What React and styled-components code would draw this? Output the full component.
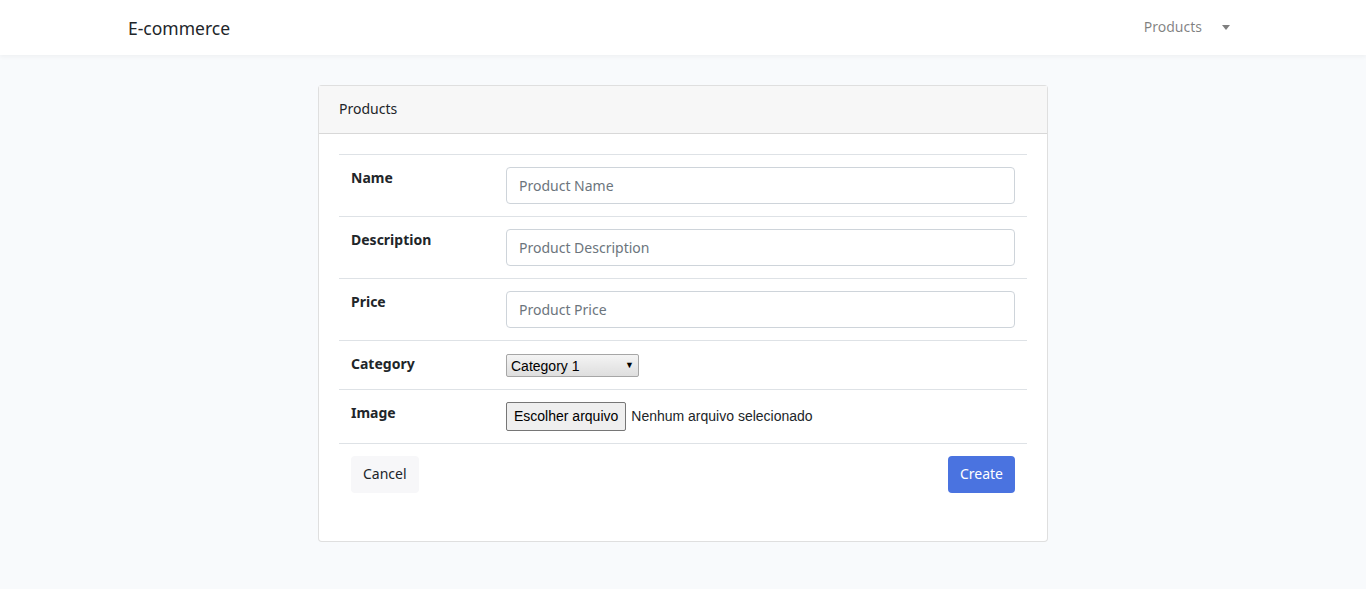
import styled, { createGlobalStyle } from "styled-components";

const GlobalStyle = createGlobalStyle`
  body {
    margin: 0;
    background: #f8fafc;
    font-family: "Noto Sans", "Open Sans", sans-serif;
    font-size: 14px;
    line-height: 1.6;
    color: #212529;
  }
  * { box-sizing: border-box; }
`;

// NAVBAR
const Nav = styled.nav`
  background: #fff;
  height: 55px;
  box-shadow: 0 2px 4px rgba(0, 0, 0, 0.04);
`;

const NavInner = styled.div`
  max-width: 1140px;
  margin: 0 auto;
  padding: 0 15px;
  height: 100%;
  display: flex;
  align-items: center;
  justify-content: space-between;
`;

const Brand = styled.a`
  font-size: 17.5px;
  color: #212529;
  text-decoration: none;
`;

const NavLink = styled.a`
  display: flex;
  align-items: center;
  gap: 20px;
  color: rgba(0, 0, 0, 0.5);
  padding-right: 8px;
`;

const Caret = styled.span`
  width: 0;
  height: 0;
  border-left: 4px solid transparent;
  border-right: 4px solid transparent;
  border-top: 5px solid rgba(0, 0, 0, 0.5);
`;

// CARD
const Main = styled.main`
  padding-top: 30px;
  display: flex;
  justify-content: center;
`;

const Card = styled.div`
  width: 730px;
  background: #fff;
  border: 1px solid rgba(0, 0, 0, 0.125);
  border-radius: 4px;
`;

const CardHeader = styled.div`
  height: 48px;
  padding: 0 20px;
  display: flex;
  align-items: center;
  background: #f7f7f7;
  border-bottom: 1px solid rgba(0, 0, 0, 0.125);
`;

const CardBody = styled.div`
  padding: 20px;
`;

const Table = styled.div`
  margin-bottom: 16px;
`;

const Row = styled.div`
  display: grid;
  grid-template-columns: 155px 1fr;
  border-top: 1px solid #dee2e6;
  padding: 12px;
  ${(p) => p.$actions && `
    display: flex;
    justify-content: space-between;
  `}
`;

const Label = styled.label`
  font-weight: 700;
`;

const Input = styled.input`
  height: 37px;
  width: 100%;
  padding: 6px 12px;
  font: inherit;
  border: 1px solid #ced4da;
  border-radius: 4px;
  &::placeholder { color: #6c757d; }
`;

const SelectWrap = styled.div`
  position: relative;
  justify-self: start;
  width: 133px;
  height: 23px;
  margin-top: 1px;
  &::after {
    content: "▼";
    position: absolute;
    right: 5px;
    top: 6px;
    font-size: 9px;
    line-height: 1;
    color: #000;
    pointer-events: none;
  }
`;

const Select = styled.select`
  appearance: none;
  width: 100%;
  height: 100%;
  padding: 0 4px;
  font-family: "Liberation Sans", Arial, sans-serif;
  font-size: 14px;
  color: #000;
  background: linear-gradient(#f4f4f4, #dedede);
  border: 1px solid #a6a6a6;
  border-radius: 2px;
`;

const FileRow = styled.div`
  display: flex;
  align-items: center;
  gap: 5px;
  font-family: "Liberation Sans", Arial, sans-serif;
  font-size: 14px;
`;

const FileButton = styled.button`
  height: 29px;
  padding: 0 7px;
  font: inherit;
  background: #efefef;
  border: 1px solid #767676;
  border-radius: 2px;
  color: #000;
`;

const Button = styled.button`
  height: 37px;
  padding: 0 12px;
  font: inherit;
  border: none;
  border-radius: 4px;
  background: ${(p) => (p.$primary ? "#4a73e0" : "#f7f7f9")};
  color: ${(p) => (p.$primary ? "#fff" : "#212529")};
`;

export default function App() {
  return (
    <>
      <GlobalStyle />
      <Nav>
        <NavInner>
          <Brand href="#">E-commerce</Brand>
          <NavLink>
            Products <Caret />
          </NavLink>
        </NavInner>
      </Nav>
      <Main>
        <Card>
          <CardHeader>Products</CardHeader>
          <CardBody>
            <Table>
              <Row>
                <Label>Name</Label>
                <Input placeholder="Product Name" />
              </Row>
              <Row>
                <Label>Description</Label>
                <Input placeholder="Product Description" />
              </Row>
              <Row>
                <Label>Price</Label>
                <Input placeholder="Product Price" />
              </Row>
              <Row>
                <Label>Category</Label>
                <SelectWrap>
                  <Select>
                    <option>Category 1</option>
                  </Select>
                </SelectWrap>
              </Row>
              <Row>
                <Label>Image</Label>
                <FileRow>
                  <FileButton>Escolher arquivo</FileButton>
                  <span>Nenhum arquivo selecionado</span>
                </FileRow>
              </Row>
              <Row $actions>
                <Button>Cancel</Button>
                <Button $primary>Create</Button>
              </Row>
            </Table>
          </CardBody>
        </Card>
      </Main>
    </>
  );
}
